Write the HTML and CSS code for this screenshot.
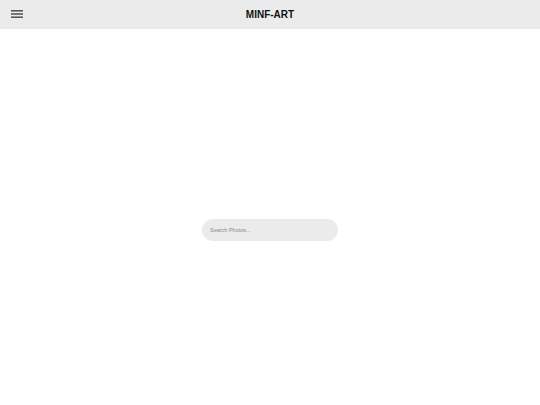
FILE: index.html
```html
<!DOCTYPE html>
<html lang="en">
<head>
<meta charset="utf-8">
<title>MINF-ART</title>
<link rel="stylesheet" href="styles.css">
</head>
<body>
<header class="topbar">
  <button class="menu-btn" aria-label="Menu">
    <svg width="12" height="8" viewBox="0 0 12 8" aria-hidden="true">
      <rect x="0" y="0.25" width="12" height="1.2" fill="#2b2b2b"/>
      <rect x="0" y="3.4" width="12" height="1.2" fill="#2b2b2b"/>
      <rect x="0" y="6.55" width="12" height="1.2" fill="#2b2b2b"/>
    </svg>
  </button>
  <h1 class="brand">MINF-ART</h1>
</header>
<main class="content">
  <form class="search">
    <input class="search-input" type="text" placeholder="Search Photos...">
  </form>
</main>
</body>
</html>
```

FILE: styles.css
```css
* { box-sizing: border-box; }
html, body {
  margin: 0;
  padding: 0;
  background: #ffffff;
  font-family: "Liberation Sans", Arial, sans-serif;
}
.topbar {
  height: 29px;
  background: #ebebeb;
  display: flex;
  align-items: center;
  justify-content: center;
  position: relative;
}
.menu-btn {
  position: absolute;
  left: 11px;
  top: 10px;
  width: 12px;
  height: 8px;
  padding: 0;
  border: 0;
  background: transparent;
  display: flex;
}
.brand {
  margin: 0;
  font-size: 10px;
  font-weight: 700;
  color: #111;
  letter-spacing: 0;
}
.content {
  padding-top: 189px;
  display: flex;
  justify-content: center;
}
.search {
  margin: 0;
}
.search-input {
  width: 136px;
  height: 22px;
  border: 0;
  border-radius: 11px;
  background: #ebebeb;
  padding: 0 8px;
  font-family: "Liberation Sans", Arial, sans-serif;
  font-size: 5.5px;
  color: #333;
  outline: none;
}
.search-input::placeholder {
  color: #8a8a8a;
}
```
